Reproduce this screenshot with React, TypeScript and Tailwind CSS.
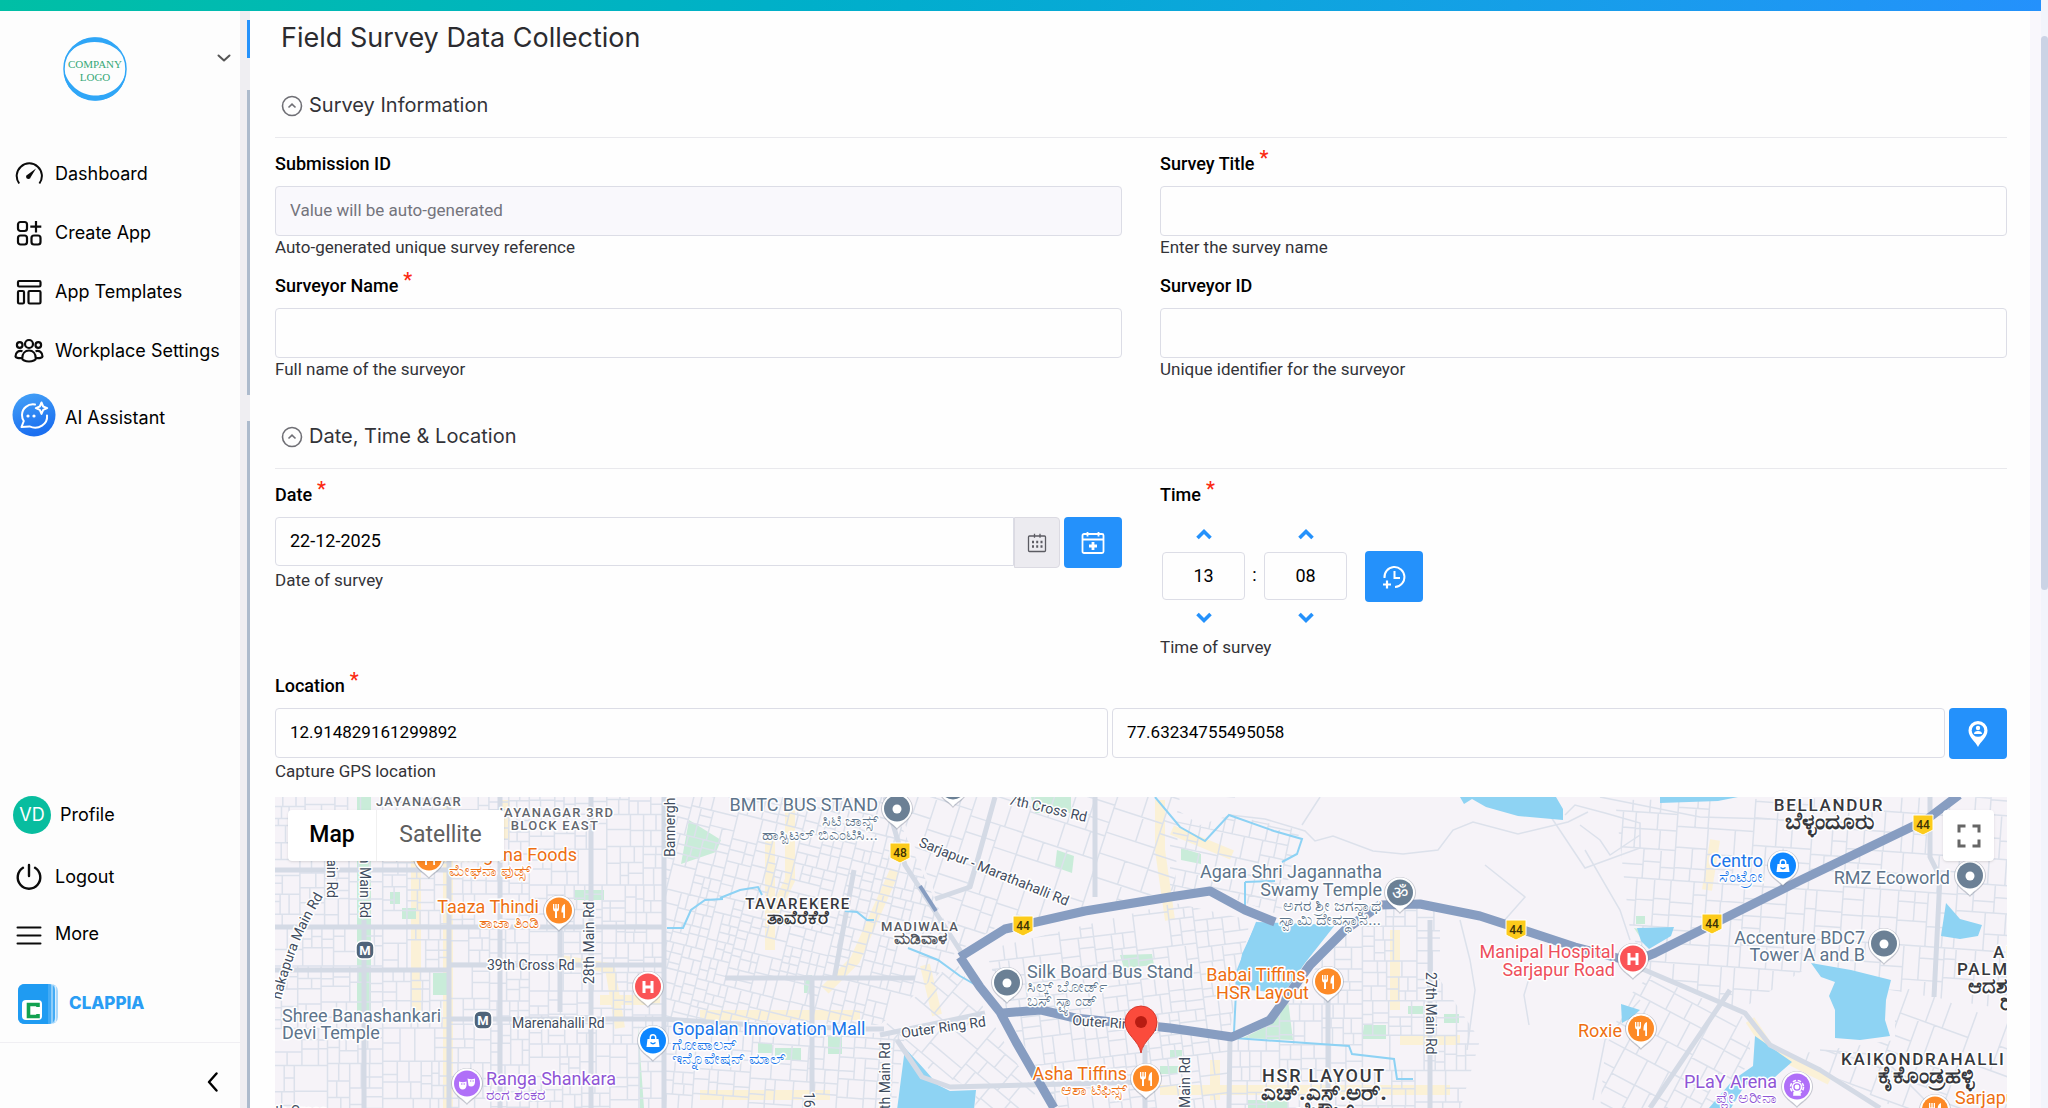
import { useState } from "react";
import type { ReactNode } from "react";

/* ---------- sidebar ---------- */

const GaugeIcon = () => (
  <svg viewBox="0 0 28 28" className="size-7" fill="none" stroke="#0b0b0b" strokeWidth="2">
    <path d="M4.2 23.5A12.6 12.6 0 1 1 24.4 23.5" strokeLinecap="butt" />
    <path d="M21 8.5 15.8 17a2.4 2.4 0 1 1-3-2.6z" fill="#0b0b0b" stroke="none" />
  </svg>
);

const CreateIcon = () => (
  <svg viewBox="0 0 28 28" className="size-7" fill="none" stroke="#0b0b0b" strokeWidth="2.200">
    <rect x="3" y="3" width="9" height="9" rx="2.500" />
    <rect x="3" y="16.500" width="9" height="9" rx="2.500" />
    <rect x="16.500" y="16.500" width="9" height="9" rx="2.500" />
    <path d="M21 2v11.500M15.300 7.700h11" />
  </svg>
);

const TemplatesIcon = () => (
  <svg viewBox="0 0 28 28" className="size-7" fill="none" stroke="#0b0b0b" strokeWidth="2.200">
    <rect x="3" y="3" width="22.500" height="5.500" rx="1.200" />
    <rect x="3" y="13" width="6" height="12.500" rx="1.200" />
    <rect x="13.500" y="13" width="12" height="12.500" rx="1.200" />
  </svg>
);

const PeopleIcon = () => (
  <svg viewBox="0 0 30 28" className="h-7 w-[30px] shrink-0" fill="none" stroke="#0b0b0b" strokeWidth="2.200">
    <circle cx="15" cy="7" r="4" />
    <circle cx="5.700" cy="8" r="2.800" />
    <circle cx="24.300" cy="8" r="2.800" />
    <path d="M8.200 21.500c0-5 3-8 6.800-8s6.800 3 6.800 8c0 1.500-3 3-6.800 3s-6.800-1.500-6.800-3z" />
    <path d="M8.500 14.200c-4-1.200-7 1.500-7 5.300 0 1.200 3 1.800 6.500 1.500M21.500 14.200c4-1.200 7 1.500 7 5.300 0 1.200-3 1.800-6.500 1.500" />
  </svg>
);

const AssistantIcon = () => (
  <svg viewBox="0 0 44 44" className="size-11">
    <defs>
      <linearGradient id="assistant" x1="0" y1="0" x2="0.3" y2="1">
        <stop offset="0" stopColor="#46a3f7" />
        <stop offset="1" stopColor="#1b6ff0" />
      </linearGradient>
    </defs>
    <circle cx="22" cy="22" r="21.500" fill="url(#assistant)" />
    <g fill="none" stroke="#fff" strokeWidth="2" strokeLinecap="round" strokeLinejoin="round">
      <path d="M23 11.500c-7-1.200-13 4-13 10.500 0 2.600.8 4.600 1.800 6L9.500 34l8-.6c9 4 18.500-2.400 17.500-11" />
      <path d="M29.500 9.500l1.700 4 4 1.700-4 1.700-1.700 4-1.700-4-4-1.700 4-1.700z" />
    </g>
    <g fill="#fff">
      <circle cx="16" cy="23" r="1.600" />
      <circle cx="22" cy="23" r="1.600" />
    </g>
  </svg>
);

const PowerIcon = () => (
  <svg viewBox="0 0 28 28" className="size-7" fill="none" stroke="#0b0b0b" strokeWidth="2.400" strokeLinecap="round">
    <path d="M8 4.800a11.300 11.300 0 1 0 12 0M14 2v11" />
  </svg>
);

const MenuIcon = () => (
  <svg viewBox="0 0 28 28" className="size-7" fill="none" stroke="#0b0b0b" strokeWidth="2" strokeLinecap="round">
    <path d="M2.500 7.500h23M2.500 15.500h23M2.500 23.500h23" />
  </svg>
);

const CompanyLogo = () => (
  <svg viewBox="0 0 68 68" className="size-[68px]" role="img" aria-label="Company logo">
    <path d="M8 19C18-2 50-3 61 20 50 4 20 2 8 19z" fill="#2fa6f7" />
    <path d="M3 30C4 10 26-1 42 3 22 3 7 14 3 30z" fill="#2fa6f7" opacity=".6" />
    <circle cx="34" cy="34" r="31" fill="none" stroke="#2fa6f7" strokeWidth="1.500" />
    <path d="M3 36c1 36 58 42 62 1-7 30-51 33-62-1z" fill="#2fa6f7" />
    <g fill="#36a877" fontFamily="Liberation Serif, serif" textAnchor="middle">
      <text x="34" y="33" fontSize="11">COMPANY</text>
      <text x="34" y="46" fontSize="11">LOGO</text>
    </g>
  </svg>
);

const ClappiaMark = () => (
  <svg viewBox="0 0 40 40" className="size-10">
    <rect width="40" height="40" rx="7" fill="#a9d8fb" />
    <rect width="37" height="40" rx="6" fill="#43abf5" />
    <path d="M34 0v40M37.500 1v38" stroke="#d9effe" />
    <path d="M7 0h23v40H7a7 7 0 0 1-7-7V7a7 7 0 0 1 7-7z" fill="#1f9bf2" />
    <rect x="4" y="16" width="20" height="20" rx="4" fill="#fff" />
    <path d="M20 23v-2.500h-9.500v12H20V30" fill="none" stroke="#12a150" strokeWidth="3.600" />
  </svg>
);

const NavItem = ({ icon, label }: { icon: ReactNode; label: string }) => (
  <a href="#" className="flex h-[59px] items-center gap-3 pl-[15px]">
    <span className="flex w-7 justify-center">{icon}</span>
    {label}
  </a>
);

const Sidebar = () => (
  <aside className="flex w-60 shrink-0 flex-col bg-[#fdfdfd] text-lg text-black">
    <button type="button" aria-label="Switch workplace" className="flex items-start justify-between pt-6 pr-[9px] pl-[61px]">
      <CompanyLogo />
      <svg viewBox="0 0 14 10" className="mt-[18px] h-[10px] w-[14px]" fill="none" stroke="#555" strokeWidth="2" strokeLinecap="round" strokeLinejoin="round">
        <path d="M1.500 2.500 7 7.500l5.500-5" />
      </svg>
    </button>
    <nav className="mt-[41px] flex flex-col">
      <NavItem icon={<GaugeIcon />} label="Dashboard" />
      <NavItem icon={<CreateIcon />} label="Create App" />
      <NavItem icon={<TemplatesIcon />} label="App Templates" />
      <NavItem icon={<PeopleIcon />} label="Workplace Settings" />
      <a href="#" className="mt-[11px] flex h-12 items-center gap-[9px] pl-3">
        <AssistantIcon />
        <span className="pt-[6px]">AI Assistant</span>
      </a>
    </nav>
    <div className="mt-auto flex flex-col">
      <a href="#" className="mb-2 flex h-12 items-center gap-[9px] pl-[13px]">
        <span className="flex size-[38px] items-center justify-center rounded-full bg-[#08bd9f] text-white">VD</span>
        Profile
      </a>
      <div className="flex flex-col pb-1">
        <NavItem icon={<PowerIcon />} label="Logout" />
        <a href="#" className="flex h-[55px] items-center gap-3 pl-[15px]">
          <MenuIcon />
          More
        </a>
      </div>
      <a href="#" className="flex h-[78px] items-center gap-[11px] border-b border-[#f0eff3] pl-[18px] text-[17px] font-extrabold text-[#2a9df4]">
        <ClappiaMark />
        CLAPPIA
      </a>
      <button type="button" aria-label="Collapse sidebar" className="flex h-[65px] items-center justify-end pt-3 pr-[21px]">
        <svg viewBox="0 0 12 20" className="h-5 w-3" fill="none" stroke="#000" strokeWidth="2.400" strokeLinecap="round" strokeLinejoin="round">
          <path d="M9.500 1.500 2 10l7.500 8.500" />
        </svg>
      </button>
    </div>
  </aside>
);

/* ---------- form pieces ---------- */

const INPUT = "h-[50px] w-full min-w-0 rounded border border-[#dcdde6] bg-transparent px-[14px] pb-[2px] text-[17px] text-black placeholder:text-[#74747c]";
const ACTION = "flex h-[51px] w-[58px] shrink-0 items-center justify-center rounded bg-[#2491fb]";

const Label = ({ id, text, required }: { id: string; text: string; required?: boolean }) => (
  <label htmlFor={id} className="mb-[9px] flex h-[26px] items-center gap-[5px] text-lg leading-6 font-medium text-black">
    {text}
    {required && <span className="-mt-3 text-xl leading-4 text-[#fb2a12]">*</span>}
  </label>
);

const Helper = ({ text }: { text: string }) => <p className="text-[17px] leading-[22px] text-[#333338]">{text}</p>;

const TextField = ({ id, label, helper, required, placeholder }: { id: string; label: string; helper: string; required?: boolean; placeholder?: string }) => (
  <div>
    <Label id={id} text={label} required={required} />
    <div className={placeholder ? "rounded bg-[#f9f8fc]" : ""}>
      <input id={id} className={`${INPUT} block`} placeholder={placeholder} readOnly={!!placeholder} />
    </div>
    <Helper text={helper} />
  </div>
);

const SectionHeader = ({ title }: { title: string }) => (
  <h2 className="mb-[13px] border-b border-[#e9e9ed] pb-4">
    <button type="button" className="flex h-8 items-center gap-[6px] pl-[6px] font-[Inter,sans-serif] text-xl text-[#333338]">
      <svg viewBox="0 0 22 22" className="mt-[2px] size-[22px]" fill="none" stroke="#6f6f75" strokeWidth="1.600">
        <circle cx="11" cy="11" r="9.500" />
        <path d="M7.500 12.500 11 9.200l3.500 3.300" />
      </svg>
      {title}
    </button>
  </h2>
);

const Spinner = ({ id, label, value }: { id: string; label: string; value: string }) => {
  const [text, setText] = useState(value);
  const step = (by: number) => setText(String(Math.max(0, Number(text) + by)).padStart(2, "0"));
  return (
    <div className="flex flex-col items-center">
      <button type="button" aria-label={`Increase ${label}`} onClick={() => step(1)} className="flex h-[35px] w-10 items-center justify-center pb-[2px]">
        <Chevron d="M1.500 10 8 3.500l6.500 6.500" />
      </button>
      <input id={id} aria-label={label} value={text} onChange={(e) => setText(e.target.value)} className="h-12 w-[83px] rounded border border-[#dcdde6] pb-[2px] text-center text-lg text-black" />
      <button type="button" aria-label={`Decrease ${label}`} onClick={() => step(-1)} className="flex h-9 w-10 items-center justify-center">
        <Chevron d="M1.500 2 8 8.500 14.500 2" />
      </button>
    </div>
  );
};

const Chevron = ({ d }: { d: string }) => (
  <svg viewBox="0 0 16 12" className="h-3 w-4" fill="none" stroke="#2491fb" strokeWidth="3.600">
    <path d={d} />
  </svg>
);

/* ---------- map ---------- */

const random = (seed: number) => () => {
  seed = (seed * 16807) % 2147483647;
  return seed / 2147483647;
};

/* Splits a rectangle into irregular city blocks and returns the streets between them. */
const streets = (x: number, y: number, w: number, h: number, min: number, seed: number) => {
  const rnd = random(seed);
  let d = "";
  const split = (x: number, y: number, w: number, h: number) => {
    const wide = w > h * (0.5 + rnd());
    const side = wide ? w : h;
    if (side < min * 2 || (side < min * 4 && rnd() < 0.12)) return;
    const at = side * (0.35 + rnd() * 0.3);
    if (wide) {
      d += `M${(x + at).toFixed(1)} ${y.toFixed(1)}v${h.toFixed(1)}`;
      split(x, y, at, h);
      split(x + at, y, w - at, h);
    } else {
      d += `M${x.toFixed(1)} ${(y + at).toFixed(1)}h${w.toFixed(1)}`;
      split(x, y, w, at);
      split(x, y + at, w, h - at);
    }
  };
  split(x, y, w, h);
  return d;
};

const districts = [
  { box: [270, 790, 180, 330], min: 9, angle: 0, seed: 7, clip: "270,790 449,790 449,1110 270,1110" },
  { box: [449, 790, 215, 330], min: 9, angle: 0, seed: 31, clip: "449,790 664,790 664,1110 449,1110" },
  { box: [620, 760, 340, 300], min: 8, angle: 14, seed: 53, clip: "664,790 885,790 960,955 880,1025 664,1020" },
  { box: [650, 1000, 260, 130], min: 10, angle: 4, seed: 77, clip: "664,1020 905,1035 895,1110 664,1110" },
  { box: [880, 740, 330, 260], min: 16, angle: 18, seed: 91, clip: "890,790 1180,790 1175,890 1000,925 960,950" },
  { box: [970, 900, 290, 260], min: 10, angle: -7, seed: 113, clip: "985,950 1175,903 1250,920 1230,1030 1230,1110 1060,1110 1010,1020" },
  { box: [900, 940, 160, 190], min: 15, angle: 40, seed: 43, clip: "880,1030 955,960 1045,1110 975,1110 976,1090 930,1070" },
  { box: [1170, 780, 180, 150], min: 10, angle: 12, seed: 129, clip: "1170,805 1200,825 1230,815 1300,830 1280,915 1210,890 1170,895" },
  { box: [1230, 900, 250, 230], min: 9, angle: 0, seed: 149, clip: "1350,925 1390,905 1440,910 1440,980 1480,1040 1460,1110 1230,1110 1232,1040 1290,1000" },
  { box: [1600, 740, 420, 330], min: 14, angle: 4, seed: 173, clip: "1615,800 2010,797 2010,1010 1890,990 1820,960 1740,1010 1650,975 1630,930" },
  { box: [1580, 960, 260, 250], min: 15, angle: 28, seed: 191, clip: "1650,975 1750,1020 1750,1060 1720,1110 1600,1110 1605,1050 1625,1000" },
  { box: [1780, 1000, 300, 150], min: 18, angle: 20, seed: 211, clip: "1895,985 2010,1020 2010,1110 1900,1110 1790,1055 1895,1040" },
];

const WATER = [
  "M905 1048l20 22 13 15 12 6 26-1-2 20h-77z",
  "M1257 922l78 3-30 38-21 30-48-4 6-35z",
  "M1460 797h96l7 12v11l-45-4-32-9-14-8-8 5z",
  "M1660 797h78l-20 4-58 2z",
  "M1637 928l37-1-3 9-22 13-8-8z",
  "M1811 963l40 7 40 10-5 20-1 20 5 16-30 4-25-2v-28l-6-14 6-14-14-5z",
  "M1755 1036l37 26-17 15-30 8-14 23h-22l24-28 20-14z",
  "M1946 903l14 16 22 6-4 11-18 3-19-3z",
  "M1621 1004l19 6-9 8-9 5z",
];

const GREEN = [
  "M689 820l32 20-5 12-35 12z",
  "M357 797h14v215h-14z",
  "M433 973h14v22h-14zM390 892h10v12h-10zM402 908h14v11h-14zM574 890h30v10h-30z",
  "M1031 797h40v16h-36zM1057 850l17 6-2 17-17-6zM1120 955l32-1 2 11-30 3z",
  "M1288 1000l5 40-50-2 30-15zM1364 1025h22v14h-24zM1408 1006h15v8h-15zM1444 1014h15v9h-15z",
  "M828 1036h14v18h-14zM775 1048h26v12h-26zM804 975h8v18h-8zM758 1043h14v10h-14z",
  "M1181 848l20 6v10l-20-4zM1636 916h9v8h-9zM1634 928l10 2 2 16zM638 1024l6 84h-4z",
  "M1248 1100h40v8h-40zM1160 1066h20v8h-20zM1170 1050h12v8h-12z",
];

const YELLOW = [
  "M448 800v308M416 830v190M505 800v40M560 960l50 8 10 60M770 840v110M895 870l-40 90-30 30M925 965l12 50",
  "M790 800v80l-20 40M1172 830l60 25M1395 930v80M1400 1040h60M1160 1090h290M1215 1060v40M600 1000h60M700 1015h160",
  "M1715 840l-8 50M1750 1020l20 30 60 30M1160 800v50l10 70M700 1095h130",
];

const MINOR_WATER = [
  "M667 928h16l8-18 14-10 18-1M720 898l20-8 18-3 4 8M845 911l12 1 10 8h7M908 948l30 12 22 16 14 8",
  "M1155 797l25 30 25 14 24-26 45 16 28 8-5 15-15 8M1245 882l30-1M1245 882v28M1257 922l-20 50-3 60M1234 1038l115 8 3 8 42 5 3 20h16",
];

const MAJOR = [
  "M449 797v311M664 797v311M364 920v188M275 927h390M449 1019h215l90 6 110 4h20",
  "M885 797l20 68 58 90M995 797l-25 90-35 12M560 912v100M880 1035l105-22M897 1040l25 37 28 10 200-5M591 797v311M500 797v311",
  "M1230 1037l-1 71M1328 990v118M1430 920v188M1145 1045v63M1095 797v100M275 870h175M449 965h215M812 980v128M725 978h190",
  "M1633 965l47 20 65 28 25 32 50 25 60 38M1930 797v60l10 20-6 120M1730 990l-80 118M275 970h174M854 870l-20 110",
];

const ROADS = [
  "M960 957l45-28 80-18 85-14 40-6 35 19 30 12",
  "M960 957l20 30 20 25 16 30 38 66",
  "M1003 1013l38-3 34 8 95 10 62 9 38-17 40-55 35-35 35-25 40-1 60 12 95 31 58 15 22-9 58-29 88-44 100-48 25-12 33-25",
];

const OUTLINES = [
  "M1235 797l-60-5M1230 815l35 4 40 12 10 10 18-5 40 15 30 3 35-4 15-20 20-8 45 12 50-12 20-10M1320 797l-18 28",
  "M1565 815l10-10 30 8 35 10v25l-55 20-40-60M1580 825l20 15 10 15 30-20M1600 797l100 20 70 2M1485 865l40 32-22 25",
  "M1460 920l10 40 5 30-8 60M1530 975l-6 20 5 30M1640 1000l-35 40-12 60M1585 850l35 60 10 30M1820 1050l60 5 60 60",
];

const Shield = ({ x, y, text }: { x: number; y: number; text: string }) => (
  <g>
    <path d={`M${x - 10} ${y - 10}h20v15l-10 5-10-5z`} fill="#fccb1b" stroke="#fff" strokeWidth="1" strokeLinejoin="round" />
    <text x={x} y={y + 4} fontSize="12" fontWeight="500" fill="#3c3206" textAnchor="middle">{text}</text>
  </g>
);

const Metro = ({ x, y }: { x: number; y: number }) => (
  <g>
    <rect x={x - 9} y={y - 9} width="18" height="18" rx="6" fill="#4f6479" stroke="#fff" strokeWidth="1.500" />
    <text x={x} y={y + 5} fontSize="13" fontWeight="700" fill="#fff" textAnchor="middle">M</text>
  </g>
);

const GLYPHS: Record<string, ReactNode> = {
  dot: <circle r="4.500" fill="#fff" />,
  food: <path d="M-6-7v5q0 2 2 2.500V7h2V.5q2-.5 2-2.500v-5h-1.300v4.500h-1V-7h-1.400v4.500h-1V-7zM6-7C3-6 2.500-3 2.500 1.500h1.700V7H6z" fill="#fff" />,
  hospital: <path d="M-5.500-6h3v4.500h5V-6h3V6h-3V1.500h-5V6h-3z" fill="#fff" />,
  shop: (
    <g>
      <path d="M-5.500-2h11l1 8h-13z" fill="#fff" />
      <path d="M-2.700-2v-1.500a2.700 2.700 0 0 1 5.400 0V-2" fill="none" stroke="#fff" strokeWidth="1.500" />
      <path d="M-2.500 1.500q2.500 2.500 5 0" fill="none" stroke="#0d86ff" strokeWidth="1.300" />
    </g>
  ),
  theatre: (
    <g fill="#fff">
      <path d="M-8-2.500q4 1.500 7.500 0v4q-.5 4-3.800 4T-8 1.500z" />
      <path d="M.5-5.500q4 1.500 7.500 0v4q-.5 4-3.800 4-2 0-2.700-1z" />
      <path d="M-6 0h1.500M-3.500 0h1.500M3-3h1.300M5.500-3h1.300" stroke="#a566f0" />
    </g>
  ),
  game: (
    <g fill="none" stroke="#fff" strokeWidth="1.600">
      <circle r="6.500" strokeDasharray="3.400 1.700" />
      <circle r="4.500" />
      <circle r="1.600" fill="#fff" />
      <path d="M-2.500 4.500-3 8h6l-.5-3.500" fill="#fff" />
    </g>
  ),
  om: <text y="6" fontSize="18" fill="#fff" textAnchor="middle">ॐ</text>,
};

const Pin = ({ x, y, color, kind }: { x: number; y: number; color: string; kind: string }) => (
  <g transform={`translate(${x} ${y})`}>
    <path d="M0 21C-3 16.500-15.500 11.500-16 0a16 16 0 0 1 32 0C15.500 11.500 3 16.500 0 21z" fill="#7d8494" opacity=".4" />
    <path d="M0 19.500C-3 14.500-15 10.500-15-.5a15 15 0 0 1 30 0C15 10.500 3 14.500 0 19.500z" fill="#fff" />
    <circle cy="-.5" r="13" fill={color} />
    {GLYPHS[kind]}
  </g>
);

const SLATE = "#5d748b";
const ORANGE = "#ee6f12";
const BLUE = "#1a76ea";
const PURPLE = "#8f55d6";
const RED = "#ee4f5c";
const ROAD = "#3f4c5e";
const INK = "#36383d";

type Place = { x: number; y: number; text: string; color: string; size?: number; end?: boolean; mid?: boolean; turn?: number };

const PLACES: Place[] = [
  { x: 577, y: 861, text: "Meghna Foods", color: ORANGE, end: true },
  { x: 449, y: 876, text: "ಮೇಘನಾ ಫುಡ್ಸ್", color: ORANGE, size: 16 },
  { x: 539, y: 913, text: "Taaza Thindi", color: ORANGE, end: true },
  { x: 539, y: 928, text: "ತಾಜಾ ತಿಂಡಿ", color: ORANGE, size: 16, end: true },
  { x: 282, y: 1022, text: "Shree Banashankari", color: SLATE },
  { x: 282, y: 1039, text: "Devi Temple", color: SLATE },
  { x: 486, y: 1085, text: "Ranga Shankara", color: PURPLE },
  { x: 486, y: 1100, text: "ರಂಗ ಶಂಕರ", color: PURPLE, size: 16 },
  { x: 672, y: 1035, text: "Gopalan Innovation Mall", color: BLUE },
  { x: 672, y: 1050, text: "ಗೋಪಾಲನ್", color: BLUE, size: 16 },
  { x: 672, y: 1064, text: "ಇನ್ನೊವೇಷನ್ ಮಾಲ್", color: BLUE, size: 16 },
  { x: 878, y: 811, text: "BMTC BUS STAND", color: SLATE, end: true },
  { x: 878, y: 826, text: "ಸಿಟಿ ಜಾನ್ಸ್", color: SLATE, size: 16, end: true },
  { x: 878, y: 840, text: "ಹಾಸ್ಪಿಟಲ್ ಬಿಎಂಟಿಸಿ...", color: SLATE, size: 16, end: true },
  { x: 1027, y: 978, text: "Silk Board Bus Stand", color: SLATE },
  { x: 1027, y: 992, text: "ಸಿಲ್ಕ್ ಬೋರ್ಡ್", color: SLATE, size: 16 },
  { x: 1027, y: 1006, text: "ಬಸ್ ಸ್ಟ್ಯಾಂಡ್", color: SLATE, size: 16 },
  { x: 1127, y: 1080, text: "Asha Tiffins", color: ORANGE, end: true },
  { x: 1127, y: 1095, text: "ಆಶಾ ಟಿಫಿನ್ಸ್", color: ORANGE, size: 16, end: true },
  { x: 1382, y: 878, text: "Agara Shri Jagannatha", color: SLATE, end: true },
  { x: 1382, y: 896, text: "Swamy Temple", color: SLATE, end: true },
  { x: 1381, y: 911, text: "ಅಗರ ಶ್ರೀ ಜಗನ್ನಾಥ", color: SLATE, size: 16, end: true },
  { x: 1381, y: 925, text: "ಸ್ವಾಮಿ ದೇವಸ್ಥಾನ...", color: SLATE, size: 16, end: true },
  { x: 1309, y: 981, text: "Babai Tiffins,", color: ORANGE, end: true },
  { x: 1309, y: 999, text: "HSR Layout", color: ORANGE, end: true },
  { x: 1615, y: 958, text: "Manipal Hospital", color: RED, end: true },
  { x: 1615, y: 976, text: "Sarjapur Road", color: RED, end: true },
  { x: 1622, y: 1037, text: "Roxie", color: ORANGE, end: true },
  { x: 1763, y: 867, text: "Centro", color: BLUE, end: true },
  { x: 1763, y: 882, text: "ಸೆಂಟ್ರೋ", color: BLUE, size: 16, end: true },
  { x: 1950, y: 884, text: "RMZ Ecoworld", color: SLATE, end: true },
  { x: 1865, y: 944, text: "Accenture BDC7", color: SLATE, end: true },
  { x: 1865, y: 961, text: "Tower A and B", color: SLATE, end: true },
  { x: 1777, y: 1088, text: "PLaY Arena", color: PURPLE, end: true },
  { x: 1777, y: 1103, text: "ಪ್ಲೇ ಅರೀನಾ", color: PURPLE, size: 16, end: true },
  { x: 1955, y: 1104, text: "Sarjapur", color: ORANGE },
  { x: 487, y: 970, text: "39th Cross Rd", color: ROAD, size: 14 },
  { x: 512, y: 1028, text: "Marenahalli Rd", color: ROAD, size: 14 },
  { x: 594, y: 984, text: "28th Main Rd", color: ROAD, size: 14, turn: -90 },
  { x: 675, y: 857, text: "Bannerghatta", color: ROAD, size: 14, turn: -90 },
  { x: 360, y: 918, text: "11th Main Rd", color: ROAD, size: 14, turn: 90, end: true },
  { x: 327, y: 898, text: "4th Main Rd", color: ROAD, size: 14, turn: 90, end: true },
  { x: 275, y: 1116, text: "th Cross", color: ROAD, size: 14 },
  { x: 1008, y: 804, text: "7th Cross Rd", color: ROAD, size: 14, turn: 13 },
  { x: 918, y: 846, text: "Sarjapur - Marathahalli Rd", color: ROAD, size: 14, turn: 22 },
  { x: 902, y: 1038, text: "Outer Ring Rd", color: ROAD, size: 14, turn: -8 },
  { x: 1072, y: 1025, text: "Outer Ring Rd", color: ROAD, size: 14, turn: 4 },
  { x: 890, y: 1117, text: "7th Main Rd", color: ROAD, size: 14, turn: -90 },
  { x: 804, y: 1092, text: "16th", color: ROAD, size: 14, turn: 90 },
  { x: 1190, y: 1108, text: "Main Rd", color: ROAD, size: 14, turn: -90 },
  { x: 1426, y: 972, text: "27th Main Rd", color: ROAD, size: 14, turn: 90 },
];

const AREAS: Place[] = [
  { x: 419, y: 806, text: "JAYANAGAR", color: "#62666e", size: 13, mid: true },
  { x: 555, y: 817, text: "JAYANAGAR 3RD", color: "#62666e", size: 13, mid: true },
  { x: 555, y: 830, text: "BLOCK EAST", color: "#62666e", size: 13, mid: true },
  { x: 798, y: 909, text: "TAVAREKERE", color: INK, size: 15, mid: true },
  { x: 920, y: 931, text: "MADIWALA", color: "#55585f", size: 13, mid: true },
  { x: 1324, y: 1082, text: "HSR LAYOUT", color: INK, size: 18, mid: true },
  { x: 1829, y: 811, text: "BELLANDUR", color: INK, size: 17, mid: true },
  { x: 1993, y: 958, text: "ADARSH", color: INK, size: 17 },
  { x: 1957, y: 975, text: "PALM RETREAT", color: INK, size: 17 },
  { x: 1841, y: 1065, text: "KAIKONDRAHALLI", color: INK, size: 17 },
];

const LOCAL_AREAS: Place[] = [
  { x: 798, y: 924, text: "ತಾವೆರೆಕೆರೆ", color: INK, size: 19, mid: true },
  { x: 920, y: 944, text: "ಮಡಿವಾಳ", color: "#55585f", size: 17, mid: true },
  { x: 1324, y: 1100, text: "ಎಚ್.ಎಸ್.ಅರ್.", color: INK, size: 23, mid: true },
  { x: 1324, y: 1119, text: "ಲೇಔಟ್", color: INK, size: 23, mid: true },
  { x: 1829, y: 829, text: "ಬೆಳ್ಳಂದೂರು", color: INK, size: 23, mid: true },
  { x: 1968, y: 993, text: "ಆದರ್ಶ ಪಾಮ್", color: INK, size: 21 },
  { x: 2000, y: 1010, text: "ರಿಟ್ರೀಟ್", color: INK, size: 21 },
  { x: 1926, y: 1083, text: "ಕೈಕೊಂಡ್ರಹಳ್ಳಿ", color: INK, size: 23, mid: true },
];

const PlaceLabel = ({ place, weight = 400, tracked }: { place: Place; weight?: number; tracked?: boolean }) => (
  <text
    x={place.x}
    y={place.y}
    fontSize={place.size ?? 18}
    fontWeight={weight}
    fill={place.color}
    textAnchor={place.end ? "end" : place.mid ? "middle" : "start"}
    transform={place.turn ? `rotate(${place.turn} ${place.x} ${place.y})` : undefined}
    className={tracked ? "tracking-widest" : undefined}
    stroke="#fff"
    strokeWidth="3"
    strokeLinejoin="round"
    paintOrder="stroke"
  >
    {place.text}
  </text>
);

const MapDrawing = () => (
  <svg viewBox="275 797 1732 311" preserveAspectRatio="xMinYMin slice" className="size-full bg-[#f6f3f8] font-[Roboto,sans-serif]" role="img" aria-label="Map of the survey location">
    <defs>
      {districts.map((d) => (
        <clipPath key={d.seed} id={`district-${d.seed}`}>
          <polygon points={d.clip} />
        </clipPath>
      ))}
      <path id="kanakapura" d="M281 1000Q294 945 318 905T326 868" />
    </defs>
    <g fill="none" stroke="#fcf1d3" strokeWidth="10" opacity=".9">
      {YELLOW.map((d) => <path key={d} d={d} />)}
    </g>
    <g fill="#c9ecd9">{GREEN.map((d) => <path key={d} d={d} />)}</g>
    <g fill="none" stroke="#dce1eb">
      {districts.map((d) => {
        const [x, y, w, h] = d.box;
        return (
          <g key={d.seed} clipPath={`url(#district-${d.seed})`}>
            <path d={streets(x, y, w, h, d.min, d.seed)} strokeWidth="1.500" transform={`rotate(${d.angle} ${x + w / 2} ${y + h / 2})`} />
          </g>
        );
      })}
      {OUTLINES.map((d) => <path key={d} d={d} strokeWidth="1.500" />)}
    </g>
    <g fill="#8ed3f3">{WATER.map((d) => <path key={d} d={d} />)}</g>
    <g fill="none" stroke="#d4dae5" strokeWidth="5" strokeLinejoin="round">
      {MAJOR.map((d) => <path key={d} d={d} />)}
    </g>
    <g fill="none" stroke="#8dd2f4" strokeWidth="2">
      {MINOR_WATER.map((d) => <path key={d} d={d} />)}
    </g>
    <g fill="none" stroke="#879dc1" strokeWidth="9" strokeLinejoin="round">
      {ROADS.map((d) => <path key={d} d={d} />)}
      <path d="M920 886l16 25" strokeWidth="4" />
    </g>
    <text fontSize="14" fill={ROAD} stroke="#fff" strokeWidth="3" paintOrder="stroke">
      <textPath href="#kanakapura">nakapura Main Rd</textPath>
    </text>
    {AREAS.map((p) => <PlaceLabel key={p.text} place={p} weight={500} tracked />)}
    {LOCAL_AREAS.map((p) => <PlaceLabel key={p.text} place={p} weight={700} />)}
    {PLACES.map((p) => <PlaceLabel key={`${p.text}${p.x}`} place={p} />)}
    <Shield x={900} y={853} text="48" />
    <Shield x={1023} y={926} text="44" />
    <Shield x={1516} y={930} text="44" />
    <Shield x={1712} y={924} text="44" />
    <Shield x={1923} y={825} text="44" />
    <Metro x={365} y={950} />
    <Metro x={483} y={1020} />
    <Pin x={429} y={858} color="#fd8a26" kind="food" />
    <Pin x={559} y={911} color="#fd8a26" kind="food" />
    <Pin x={1146} y={1079} color="#fd8a26" kind="food" />
    <Pin x={1328} y={982} color="#fd8a26" kind="food" />
    <Pin x={1641} y={1029} color="#fd8a26" kind="food" />
    <Pin x={1935} y={1110} color="#fd8a26" kind="food" />
    <Pin x={648} y={987} color="#fb5456" kind="hospital" />
    <Pin x={1633} y={959} color="#fb5456" kind="hospital" />
    <Pin x={653} y={1041} color="#0d86ff" kind="shop" />
    <Pin x={1783} y={866} color="#0d86ff" kind="shop" />
    <Pin x={467} y={1084} color="#b070f8" kind="theatre" />
    <Pin x={1797} y={1087} color="#b070f8" kind="game" />
    <Pin x={897} y={809} color="#6b8095" kind="dot" />
    <Pin x={953} y={787} color="#6b8095" kind="dot" />
    <Pin x={1007} y={983} color="#6b8095" kind="dot" />
    <Pin x={1970} y={876} color="#6b8095" kind="dot" />
    <Pin x={1884} y={944} color="#6b8095" kind="dot" />
    <Pin x={1400} y={893} color="#6b8095" kind="om" />
    <path d="M1141 1053c-2-13-16-18-16-31a16 16 0 0 1 32 0c0 13-14 18-16 31z" fill="#fb4b3c" stroke="#d7392d" />
    <circle cx="1141" cy="1022" r="6" fill="#b81c12" />
  </svg>
);

const LocationMap = () => (
  <div className="relative mt-[15px] min-h-0 flex-1 overflow-hidden">
    <MapDrawing />
    <div className="absolute top-[13px] left-[13px] flex h-[51px] rounded-sm bg-white font-[Roboto,sans-serif] text-[23px] shadow">
      <button type="button" aria-pressed="true" className="w-[89px] border-r border-[#f0f0f0] font-medium text-black">Map</button>
      <button type="button" aria-pressed="false" className="w-[127px] text-[#5f5f5f]">Satellite</button>
    </div>
    <button type="button" aria-label="Toggle fullscreen view" className="absolute top-[13px] right-[13px] flex size-[51px] items-center justify-center rounded-sm bg-white shadow">
      <svg viewBox="0 0 24 24" className="size-6" fill="none" stroke="#666" strokeWidth="3">
        <path d="M2 8.500V2h6.500M15.500 2H22v6.500M22 15.500V22h-6.500M8.500 22H2v-6.500" />
      </svg>
    </button>
  </div>
);

/* ---------- page ---------- */

const SurveyForm = () => (
  <main className="flex min-w-0 flex-1 flex-col bg-[#fefefe] pt-[7px] pr-[23px] pl-[25px] font-[Roboto,sans-serif]">
    <h1 className="mb-[31px] pl-[6px] font-[Inter,sans-serif] text-[27px] leading-10 text-[#2b2b2f]">Field Survey Data Collection</h1>

    <SectionHeader title="Survey Information" />
    <div className="mb-10 grid grid-cols-2 gap-x-[38px] gap-y-[15px]">
      <TextField id="submission-id" label="Submission ID" helper="Auto-generated unique survey reference" placeholder="Value will be auto-generated" />
      <TextField id="survey-title" label="Survey Title" helper="Enter the survey name" required />
      <TextField id="surveyor-name" label="Surveyor Name" helper="Full name of the surveyor" required />
      <TextField id="surveyor-id" label="Surveyor ID" helper="Unique identifier for the surveyor" />
    </div>

    <SectionHeader title="Date, Time & Location" />
    <div className="mb-[15px] grid grid-cols-2 gap-x-[38px]">
      <div>
        <Label id="date" text="Date" required />
        <div className="mb-px flex gap-1">
          <div className="flex flex-1">
            <input id="date" defaultValue="22-12-2025" className="h-[49px] w-full min-w-0 rounded-l border border-[#dcdde6] px-[14px] pb-[2px] text-lg text-black" />
            <button type="button" aria-label="Open calendar" className="flex h-[51px] w-[46px] shrink-0 items-center justify-center rounded-r border border-[#dbdae2] bg-[#ecebf0]">
              <svg viewBox="0 0 20 20" className="size-5" fill="none" stroke="#5b5b62" strokeWidth="1.300">
                <rect x="1.500" y="3" width="17" height="15.500" rx="1" />
                <path d="M7.500 .8v4M13 .8v4" />
                <path d="M5 9h2M9.200 9h2M13.500 9h2M5 13.500h2M9.200 13.500h2M13.500 13.500h2" strokeWidth="2.400" />
              </svg>
            </button>
          </div>
          <button type="button" aria-label="Use today's date" className={ACTION}>
            <svg viewBox="0 0 24 24" className="size-6" fill="none" stroke="#fff" strokeWidth="1.800">
              <rect x="1.500" y="3" width="21" height="19" rx="1.500" />
              <path d="M1.500 8.500h21M6.500 1v4.500M17.500 1v4.500" />
              <path d="M12 11v8M8 15h8" strokeWidth="2.800" />
            </svg>
          </button>
        </div>
        <Helper text="Date of survey" />
      </div>
      <div>
        <Label id="hour" text="Time" required />
        <div className="flex items-center pl-[2px]">
          <Spinner id="hour" label="Hour" value="13" />
          <span className="w-[19px] pb-[3px] text-center text-lg">:</span>
          <Spinner id="minute" label="Minute" value="08" />
          <button type="button" aria-label="Use current time" className={`${ACTION} ml-[18px]`}>
            <svg viewBox="0 0 24 24" className="size-6" fill="none" stroke="#fff" strokeWidth="2">
              <path d="M2.500 13A10 10 0 1 1 13 22M12.500 6v7h5.500" />
              <path d="M5 15.500v8M1 19.500h8" strokeWidth="2.200" />
            </svg>
          </button>
        </div>
        <Helper text="Time of survey" />
      </div>
    </div>

    <div>
      <Label id="latitude" text="Location" required />
      <div className="mb-px flex gap-1">
        <input id="latitude" defaultValue="12.914829161299892" className={INPUT} />
        <input id="longitude" aria-label="Longitude" defaultValue="77.63234755495058" className={INPUT} />
        <button type="button" aria-label="Capture current location" className={ACTION}>
          <svg viewBox="0 0 20 26" className="h-[26px] w-5">
            <path d="M10 26C8 21 .5 16.500 .5 9.500a9.500 9.500 0 0 1 19 0C19.500 16.500 12 21 10 26z" fill="#fff" />
            <circle cx="10" cy="9.500" r="6.300" fill="#2491fb" />
            <circle cx="10" cy="7" r="2.200" fill="#fff" />
            <path d="M6 13q0-3 4-3t4 3z" fill="#fff" />
          </svg>
        </button>
      </div>
      <Helper text="Capture GPS location" />
    </div>
    <LocationMap />
  </main>
);

export default function App() {
  return (
    <div className="flex h-screen overflow-hidden font-[Inter,sans-serif]">
      <div className="flex min-w-0 flex-1 flex-col">
        <div className="h-[11px] shrink-0 bg-linear-to-r from-[#00bfa5] to-[#2491fc]" />
        <div className="flex min-h-0 flex-1">
          <Sidebar />
          <div className="flex w-[10px] shrink-0 flex-col items-end bg-[#efeef2] pt-[9px]">
            <div className="h-[38px] w-[3px] bg-[#2491fb]" />
            <div className="mt-8 h-[305px] w-[3px] bg-[#adbbcd]" />
            <div className="mt-[26px] w-[3px] flex-1 bg-[#adbbcd]" />
          </div>
          <SurveyForm />
          <div className="w-[11px] shrink-0 bg-[#f9f7fc]" />
        </div>
      </div>
      <div className="w-[7px] shrink-0 bg-[#f2f4fb] pt-9">
        <div className="h-[554px] rounded-full bg-[#cbd3e5]" />
      </div>
    </div>
  );
}
